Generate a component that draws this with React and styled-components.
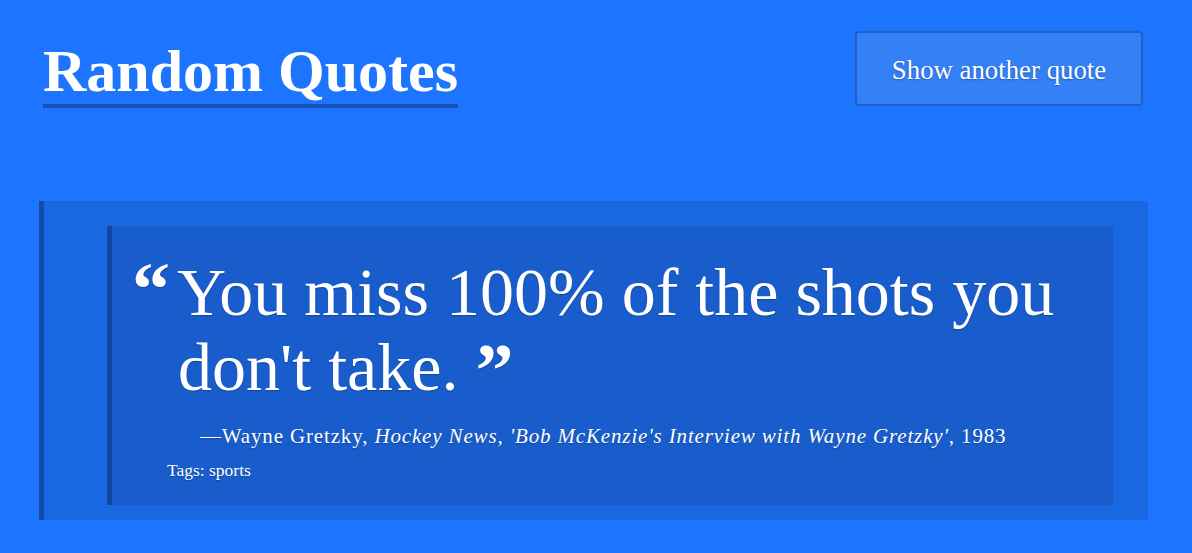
import React from 'react';
import styled, { createGlobalStyle } from 'styled-components';

const Global = createGlobalStyle`
  html, body { margin: 0; padding: 0; background: #1d74fe; }
  body {
    font-family: "Liberation Serif", "DejaVu Serif", serif;
    color: #fff;
  }
`;

const Page = styled.div`
  padding: 0 44px 0 39px;
`;

const Header = styled.header`
  display: flex;
  justify-content: space-between;
  align-items: flex-start;
  padding: 31px 5px 0 4px;
`;

const Title = styled.h1`
  margin: 7px 0 0;
  font-size: 60px;
  line-height: 66px;
  font-weight: 700;
`;

const TitleLink = styled.a`
  display: inline-block;
  color: #fff;
  text-decoration: none;
  border-bottom: 4px solid #1651b5;
`;

const Button = styled.button`
  width: 288px;
  height: 75px;
  box-sizing: border-box;
  background: #3481f7;
  border: 2px solid #2460c2;
  border-radius: 4px;
  color: #fff;
  font-family: inherit;
  font-size: 26.8px;
  text-shadow: 0 1px 2px rgba(0, 0, 0, 0.3);
  cursor: pointer;
  padding: 4px 0 0;
`;

const Block = styled.section`
  margin-top: 93px;
  background: #1a67e2;
  border-left: 5px solid #134ca6;
  border-radius: 0 4px 4px 0;
  padding: 25px 35px 15px 63px;
`;

const Card = styled.blockquote`
  margin: 0;
  background: #185dcb;
  border-left: 5px solid #0f46a0;
  border-radius: 0 4px 4px 0;
  padding: 29px 20px 24px 21px;
  text-shadow: 0 1px 1px rgba(0, 0, 0, 0.25);
`;

const QuoteText = styled.p`
  margin: 0;
  padding-left: 45px;
  text-indent: -45px;
  font-size: 68px;
  line-height: 75px;
`;

const Mark = styled.span`
  font-weight: 700;
  font-size: 76px;
  line-height: 0;
  vertical-align: ${p => p.$shift}px;
`;

const OpenMark = styled(Mark)`
  display: inline-block;
  width: 45px;
  text-indent: 0;
  margin-left: -1px;
`;

const Attribution = styled.p`
  margin: 17px 0 0 67px;
  font-size: 21px;
  line-height: 28px;
  letter-spacing: 0.85px;
`;

const Source = styled.cite`
  font-style: italic;
`;

const Tags = styled.p`
  margin: 9px 0 0 34px;
  font-size: 17.5px;
  line-height: 22px;
`;

export default function App() {
  return (
    <>
      <Global />
      <Page>
        <Header>
          <Title>
            <TitleLink href="#">Random Quotes</TitleLink>
          </Title>
          <Button type="button">Show another quote</Button>
        </Header>
        <Block>
          <Card>
            <QuoteText>
              <OpenMark $shift={0}>{'\u201C'}</OpenMark>
              You miss 100% of the shots you don't take. <Mark $shift={-6}>{'\u201D'}</Mark>
            </QuoteText>
            <Attribution>
              —Wayne Gretzky, <Source>Hockey News, 'Bob McKenzie's Interview with Wayne Gretzky'</Source>, 1983
            </Attribution>
            <Tags>Tags: sports</Tags>
          </Card>
        </Block>
      </Page>
    </>
  );
}
